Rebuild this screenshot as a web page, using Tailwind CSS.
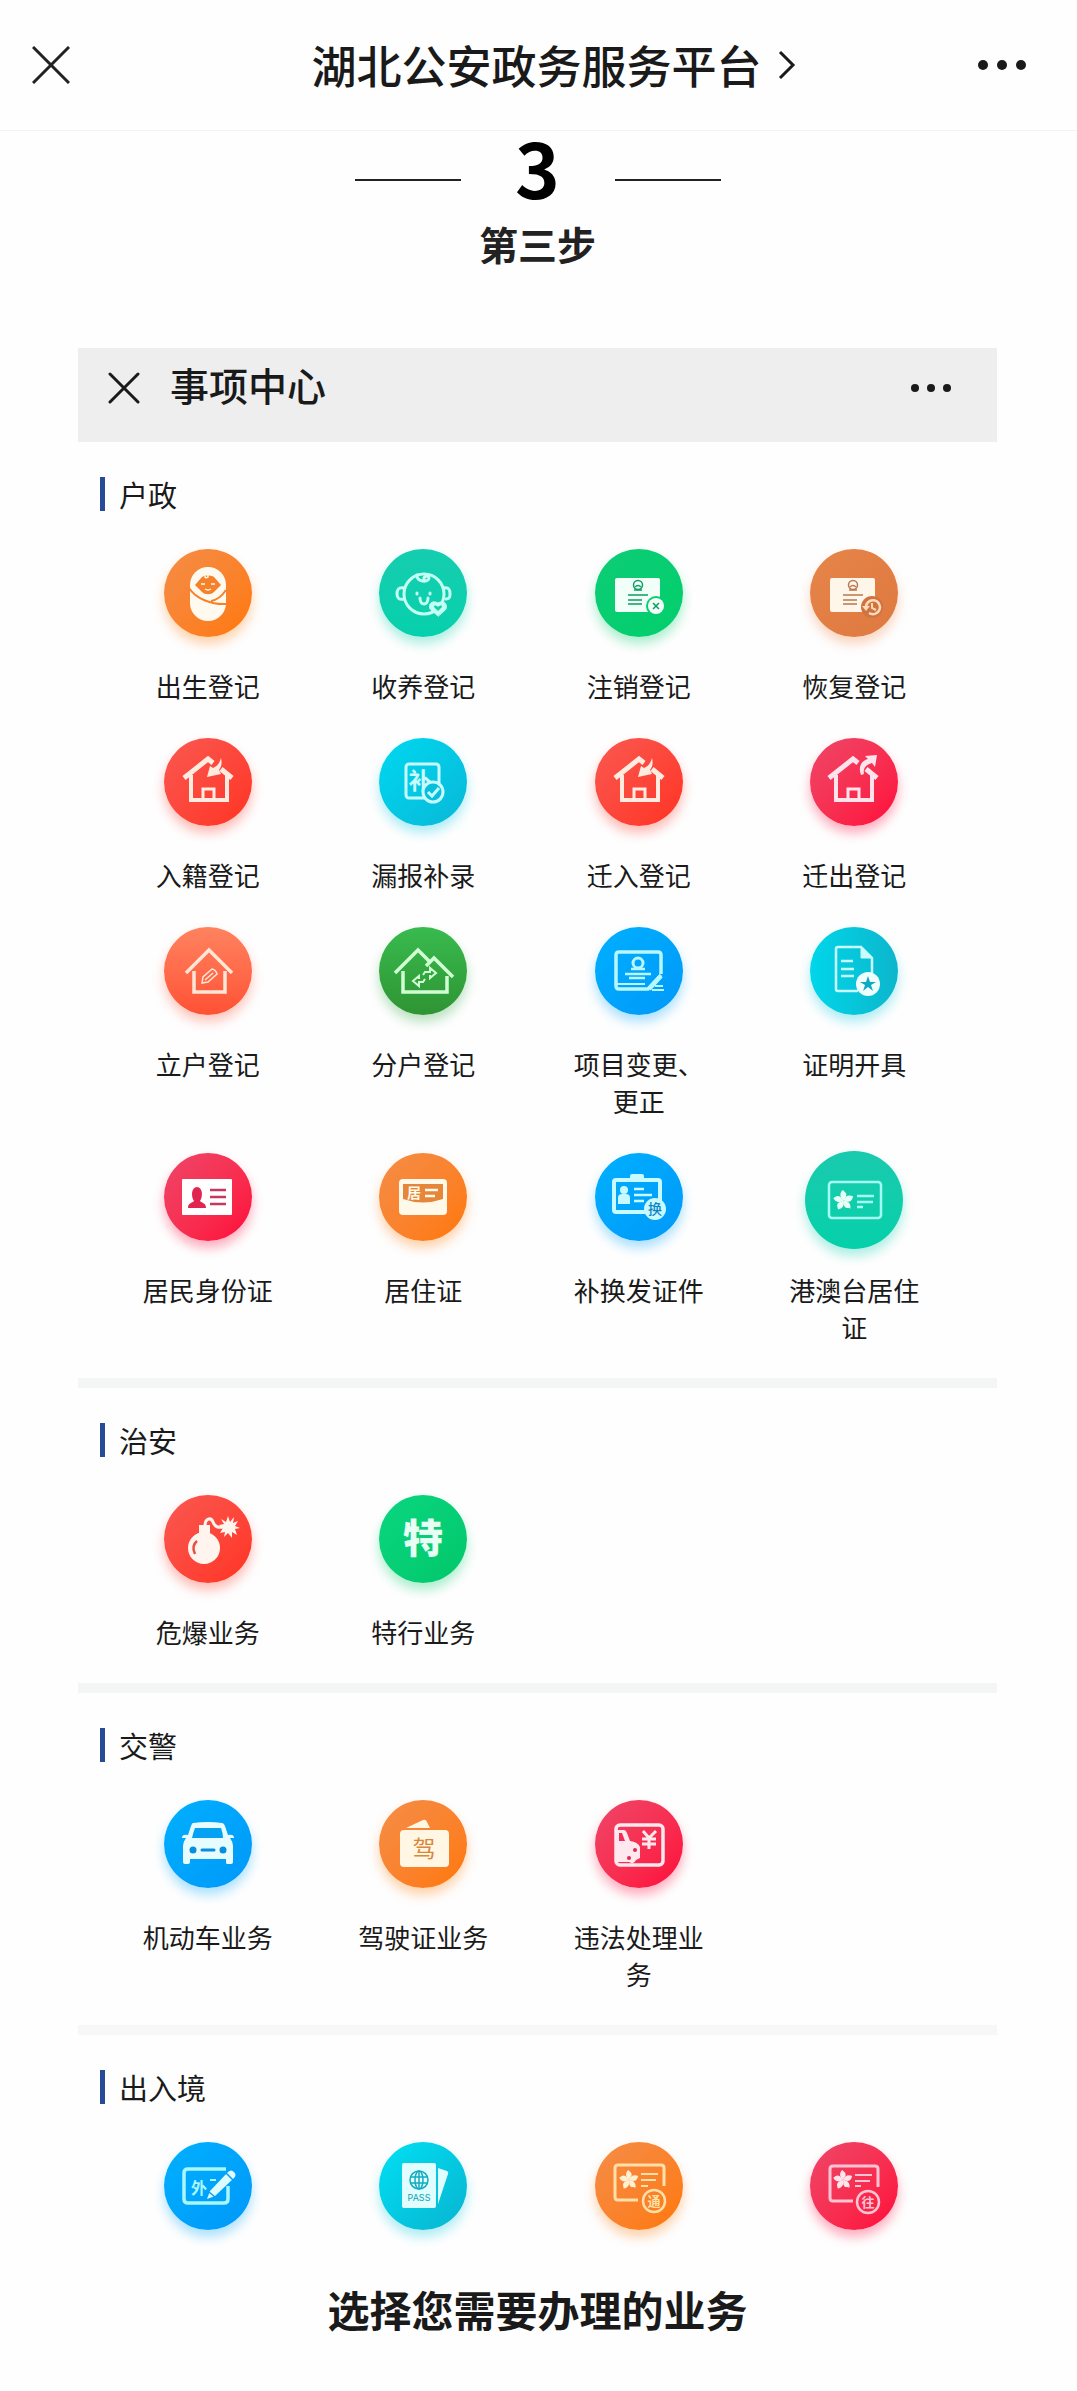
<!DOCTYPE html>
<html lang="zh-CN">
<head>
  <meta charset="UTF-8" />
  <meta name="viewport" content="width=device-width, initial-scale=1" />
  <title>湖北公安政务服务平台</title>
  <script src="https://cdn.jsdelivr.net/npm/@tailwindcss/browser@4"></script>
</head>
<body class="bg-[#fefefe] text-[#1a1a1a] font-['Noto_Sans_CJK_SC',sans-serif]">

  <!-- shared icon parts -->
  <svg class="hidden" aria-hidden="true">
    <symbol id="flower" viewBox="-12 -12 24 24">
      <g fill="currentColor">
        <path id="petal" d="M0 0C-4 -3 -5 -8 -1 -12C1 -10 4 -9 3 -5C2 -3 1 -2 0 0Z" />
        <use href="#petal" transform="rotate(72)" />
        <use href="#petal" transform="rotate(144)" />
        <use href="#petal" transform="rotate(216)" />
        <use href="#petal" transform="rotate(288)" />
      </g>
    </symbol>
    <symbol id="house" viewBox="0 0 88 88">
      <g fill="none" stroke="currentColor" stroke-width="4">
        <path d="M20 40L44 21L49 25M57 31L68 40" stroke-width="5" />
        <path d="M27 37V62H63V37" />
        <path d="M39 62V51H50V62" stroke-width="3" />
      </g>
    </symbol>
    <symbol id="house-in" viewBox="0 0 88 88">
      <use href="#house" />
      <path d="M57 20C58 25 58 28 55 32L57 36L43 39L46 28L49 30C54 28 56 24 57 20Z" fill="currentColor" />
    </symbol>
  </svg>

  <header class="flex h-[131px] items-center border-b border-[#f2f2f2]">
    <button type="button" aria-label="关闭" class="pl-[32px] pr-[60px]">
      <svg class="size-[38px]" viewBox="0 0 38 38" fill="none" stroke="#222" stroke-width="3"><path d="M1 1L37 37M37 1L1 37" /></svg>
    </button>
    <h1 class="flex-1 text-center">
      <a href="#" class="inline-flex items-center gap-4 text-[45px] leading-[60px] font-medium">
        湖北公安政务服务平台
        <svg class="h-[30px] w-[18px]" viewBox="0 0 18 30" fill="none" stroke="#1a1a1a" stroke-width="3"><path d="M2 2L15 15L2 28" /></svg>
      </a>
    </h1>
    <button type="button" aria-label="更多" class="pr-[50px]">
      <svg class="h-[12px] w-[50px]" viewBox="0 0 50 12" fill="#1a1a1a"><circle cx="6" cy="6" r="5" /><circle cx="25" cy="6" r="5" /><circle cx="44" cy="6" r="5" /></svg>
    </button>
  </header>

  <main class="pr-[80px] pl-[78px]">
    <div class="flex items-center justify-center pt-[5px]">
      <span class="h-0.5 w-[106px] bg-[#222]"></span>
      <span class="w-[154px] pb-7 text-center text-[76px] leading-[60px] font-bold text-black">3</span>
      <span class="h-0.5 w-[106px] bg-[#222]"></span>
    </div>
    <h2 class="text-center text-[39px] leading-[38px] font-bold text-[#222]">第三步</h2>

    <div class="mt-[86px]">
      <div class="flex h-[94px] items-center bg-[#eee] pr-[45px] pb-3.5 pl-[30px]">
        <button type="button" aria-label="返回">
          <svg class="size-[32px]" viewBox="0 0 32 32" fill="none" stroke="#1a1a1a" stroke-width="3" stroke-linecap="round"><path d="M2 2L30 30M30 2L2 30" /></svg>
        </button>
        <h3 class="ml-[30px] flex-1 pb-2 text-[39px] leading-[44px] font-medium">事项中心</h3>
        <button type="button" aria-label="菜单">
          <svg class="h-[10px] w-[42px]" viewBox="0 0 42 10" fill="#1a1a1a"><circle cx="5" cy="5" r="4" /><circle cx="21" cy="5" r="4" /><circle cx="37" cy="5" r="4" /></svg>
        </button>
      </div>

      <!-- 户政 -->
      <section class="border-b-[10px] border-[#f4f6f6] pt-[35px] pr-[35px] pb-[33px] pl-[22px]">
        <h4 class="flex h-[34px] items-center border-l-[5px] border-[#274b98] pl-3.5 text-[29px] leading-[34px]">户政</h4>
        <div class="mt-[38px] grid grid-cols-4 gap-y-[34px] text-center text-[26px] leading-[37px]">
          <a href="#" class="flex flex-col items-center gap-[30px]">
            <span class="size-[88px] rounded-full bg-linear-to-br from-[#f48d45] to-[#ff7800] text-[#fffaf0] shadow-[0_7px_12px_#ff780055]">
              <svg viewBox="0 0 88 88">
                <rect x="26" y="18" width="36" height="54" rx="18" fill="currentColor" />
                <path d="M31 36L38 28C41 26 47 26 50 28L57 36L50 43C47 46 41 46 38 43Z" fill="#f5822b" />
                <path d="M25 39C32 50 48 56 63 55M62 41C58 47 53 51 47 52" fill="none" stroke="#f5822b" stroke-width="2" />
                <path d="M44 26V28Q41 30 41 27M37 35H41M47 35H51M41 40Q44 42 47 40" fill="none" stroke="currentColor" stroke-width="1.5" />
              </svg>
            </span>
            <span class="w-[140px]">出生登记</span>
          </a>
          <a href="#" class="flex flex-col items-center gap-[30px]">
            <span class="size-[88px] rounded-full bg-linear-to-b from-[#15cdb0] to-[#06d0ac] text-[#c4fff4] shadow-[0_7px_12px_#06d0ac55]">
              <svg viewBox="0 0 88 88" fill="none" stroke="currentColor" stroke-width="3" stroke-linecap="round">
                <circle cx="45" cy="45" r="20" />
                <path d="M25 39C19 38 18 41 18 45C18 49 20 51 25 50M65 39C70 38 71 41 71 45C71 49 70 50 67 50" />
                <path d="M38 26C37 33 50 34 50 29C50 26 44 27 45 30" />
                <path d="M38 44V45M51 44V45" />
                <path d="M41 49C41 57 49 57 49 49" />
                <path d="M59 67L51 60C49 54 54 51 59 54C64 51 69 54 67 60Z" fill="currentColor" stroke-width="1" />
                <path d="M59 62L55 58C55 56 57 56 59 58C61 56 63 56 63 58Z" fill="#10cfad" stroke="none" />
              </svg>
            </span>
            <span class="w-[140px]">收养登记</span>
          </a>
          <a href="#" class="flex flex-col items-center gap-[30px]">
            <span class="size-[88px] rounded-full bg-linear-to-br from-[#0dcc76] to-[#02cf6b] text-[#f2fff8] shadow-[0_7px_12px_#02cf6b55]">
              <svg viewBox="0 0 88 88">
                <rect x="20" y="29" width="45" height="34" rx="2" fill="currentColor" />
                <g fill="none" stroke="#0b9f60" stroke-width="1.5">
                  <circle cx="43" cy="36" r="4.5" /><path d="M39 41H47M40 38Q43 35 46 38" />
                  <path d="M33 46H53M33 51H47M33 55H47" />
                </g>
                <circle cx="61" cy="57" r="10" fill="#07cd70" />
                <circle cx="61" cy="57" r="8" fill="currentColor" />
                <path d="M58 54L64 60M64 54L58 60" stroke="#0b9f60" stroke-width="1.5" />
              </svg>
            </span>
            <span class="w-[140px]">注销登记</span>
          </a>
          <a href="#" class="flex flex-col items-center gap-[30px]">
            <span class="size-[88px] rounded-full bg-linear-to-br from-[#e78549] to-[#de783f] text-[#fff6ea] shadow-[0_7px_12px_#f0803f55]">
              <svg viewBox="0 0 88 88">
                <rect x="20" y="29" width="45" height="34" rx="2" fill="currentColor" />
                <g fill="none" stroke="#b97850" stroke-width="1.5">
                  <circle cx="43" cy="36" r="4.5" /><path d="M39 41H47M40 38Q43 35 46 38" />
                  <path d="M33 46H53M33 51H47M33 55H47" />
                </g>
                <circle cx="62" cy="58" r="11" fill="#cf7440" />
                <path d="M56 59A7 7 0 1 1 59 64" fill="none" stroke="#ffd9b8" stroke-width="2.5" />
                <path d="M52 57H60L56 62Z" fill="#ffd9b8" />
                <path d="M62 54V59L66 61" fill="none" stroke="#ffd9b8" stroke-width="2" />
              </svg>
            </span>
            <span class="w-[140px]">恢复登记</span>
          </a>

          <a href="#" class="flex flex-col items-center gap-[30px]">
            <span class="size-[88px] rounded-full bg-linear-to-br from-[#fa5750] to-[#ff3220] text-[#ffebe0] shadow-[0_7px_12px_#ff322055]">
              <svg viewBox="0 0 88 88"><use href="#house-in" /></svg>
            </span>
            <span class="w-[140px]">入籍登记</span>
          </a>
          <a href="#" class="flex flex-col items-center gap-[30px]">
            <span class="size-[88px] rounded-full bg-linear-to-br from-[#00d8f0] to-[#08b8d8] text-[#c6fbff] shadow-[0_7px_12px_#08c8e855]">
              <svg viewBox="0 0 88 88" fill="none" stroke="currentColor" stroke-width="3">
                <rect x="27" y="26" width="33" height="34" rx="3" />
                <text x="41" y="51" font-size="23" font-weight="700" text-anchor="middle" fill="currentColor" stroke="none">补</text>
                <circle cx="54" cy="54" r="10" fill="#06bfdc" />
                <path d="M49 54L53 58L60 50" />
              </svg>
            </span>
            <span class="w-[140px]">漏报补录</span>
          </a>
          <a href="#" class="flex flex-col items-center gap-[30px]">
            <span class="size-[88px] rounded-full bg-linear-to-br from-[#fa5750] to-[#ff3220] text-[#ffebe0] shadow-[0_7px_12px_#ff322055]">
              <svg viewBox="0 0 88 88"><use href="#house-in" /></svg>
            </span>
            <span class="w-[140px]">迁入登记</span>
          </a>
          <a href="#" class="flex flex-col items-center gap-[30px]">
            <span class="size-[88px] rounded-full bg-linear-to-br from-[#ee4468] to-[#ff0038] text-[#ffe3ec] shadow-[0_7px_12px_#ff003855]">
              <svg viewBox="0 0 88 88">
                <use href="#house" x="-1" />
                <path d="M51 37C48 29 51 23 58 21L55 18L67 17L65 29L62 25C55 27 53 31 54 36Z" fill="currentColor" />
              </svg>
            </span>
            <span class="w-[140px]">迁出登记</span>
          </a>

          <a href="#" class="flex flex-col items-center gap-[30px]">
            <span class="size-[88px] rounded-full bg-linear-to-b from-[#ff825f] to-[#ff5034] text-[#ffe6d6] shadow-[0_7px_12px_#ff503455]">
              <svg viewBox="0 0 88 88" fill="none" stroke="currentColor" stroke-width="3.5">
                <path d="M22 46L45 23L68 46M30 44V65H61V44" />
                <path d="M38 56L39 50L48 42Q52 43 53 47L44 55ZM41 53L49 46" stroke-width="1.5" />
              </svg>
            </span>
            <span class="w-[140px]">立户登记</span>
          </a>
          <a href="#" class="flex flex-col items-center gap-[30px]">
            <span class="size-[88px] rounded-full bg-linear-to-b from-[#38bb4e] to-[#2f9433] text-[#d0ffd4] shadow-[0_7px_12px_#2fa84555]">
              <svg viewBox="0 0 88 88" fill="none" stroke="currentColor" stroke-width="3.5">
                <path d="M16 46L39 23L50 34M47 39L55 31L74 50M24 44V65H68V49" />
                <path d="M44 48L46 45H51V41L57 46L51 51V48M46 52L44 55H40V59L34 54L40 49V52" stroke-width="2" />
              </svg>
            </span>
            <span class="w-[140px]">分户登记</span>
          </a>
          <a href="#" class="flex flex-col items-center gap-[30px]">
            <span class="size-[88px] rounded-full bg-linear-to-br from-[#00b0ff] to-[#0098f8] text-[#b8f7ff] shadow-[0_7px_12px_#00a4ff55]">
              <svg viewBox="0 0 88 88" fill="none" stroke="currentColor" stroke-width="3.5">
                <path d="M66 47V28Q66 25 63 25H24Q21 25 21 28V59Q21 62 24 62H53L66 48" />
                <circle cx="43" cy="36" r="5" stroke-width="3" />
                <path d="M36 42H50M30 47H56M34 51H50" stroke-width="2.5" />
                <path d="M22 57H50M60 59H68M57 63H69" stroke-width="2" />
                <path d="M66 49L54 62" stroke-width="4.5" />
              </svg>
            </span>
            <span class="w-[140px]">项目变更、更正</span>
          </a>
          <a href="#" class="flex flex-col items-center gap-[30px]">
            <span class="size-[88px] rounded-full bg-linear-to-r from-[#00d6ea] to-[#0cb6cc] text-[#c8fdff] shadow-[0_7px_12px_#08c8e055]">
              <svg viewBox="0 0 88 88" fill="none" stroke="currentColor" stroke-width="2.5">
                <path d="M62 46V31L51 20H28Q26 20 26 22V62Q26 64 28 64H48M31 34H43M31 42H44M31 49H44" />
                <path d="M51 19V31H63Z" fill="currentColor" stroke-width="1" />
                <circle cx="58" cy="57" r="12" fill="#effeff" stroke="none" />
                <path d="M58 49L60 55H66L61 58L63 64L58 60L53 64L55 58L50 55H56Z" fill="#0cabc2" stroke="none" />
              </svg>
            </span>
            <span class="w-[140px]">证明开具</span>
          </a>

          <a href="#" class="flex flex-col items-center gap-[30px]">
            <span class="size-[88px] rounded-full bg-linear-to-br from-[#ee4468] to-[#ff0038] text-white shadow-[0_7px_12px_#ff003855]">
              <svg viewBox="0 0 88 88">
                <rect x="18" y="26" width="50" height="36" rx="1" fill="currentColor" />
                <path d="M24 55C24 50 28 50 30 48C27 44 27 34 33 34C39 34 39 44 36 48C38 50 42 50 42 55Z" fill="#e22550" />
                <path d="M46 37H62M46 44H62M46 51H62" stroke="#c23a5c" stroke-width="2.5" />
              </svg>
            </span>
            <span class="w-[140px]">居民身份证</span>
          </a>
          <a href="#" class="flex flex-col items-center gap-[30px]">
            <span class="size-[88px] rounded-full bg-linear-to-br from-[#f48d45] to-[#ff7800] text-[#fff9ea] shadow-[0_7px_12px_#ff780055]">
              <svg viewBox="0 0 88 88">
                <rect x="20" y="26" width="48" height="36" rx="4" fill="currentColor" />
                <path d="M24 31H64V46Q44 53 24 46Z" fill="#e5863a" />
                <text x="35" y="45" font-size="14" font-weight="700" text-anchor="middle" fill="currentColor">居</text>
                <path d="M46 37H59M46 43H56" stroke="currentColor" stroke-width="2.5" />
              </svg>
            </span>
            <span class="w-[140px]">居住证</span>
          </a>
          <a href="#" class="flex flex-col items-center gap-[30px]">
            <span class="size-[88px] rounded-full bg-linear-to-br from-[#00b0ff] to-[#0098f8] text-[#c8f9ff] shadow-[0_7px_12px_#00a4ff55]">
              <svg viewBox="0 0 88 88">
                <rect x="19" y="27" width="46" height="32" rx="2" fill="none" stroke="currentColor" stroke-width="4" />
                <path d="M35 26V23Q35 21 37 21H47Q49 21 49 23V26Z" fill="currentColor" />
                <circle cx="29" cy="37" r="4" fill="currentColor" />
                <path d="M23 51V45Q23 41 27 41H31Q35 41 35 45V51Z" fill="currentColor" />
                <path d="M39 36H49M39 42H57M39 48H49" stroke="currentColor" stroke-width="2.5" />
                <circle cx="60" cy="56" r="11" fill="currentColor" />
                <text x="60" y="61" font-size="14" font-weight="500" text-anchor="middle" fill="#0b84c4">换</text>
              </svg>
            </span>
            <span class="w-[140px]">补换发证件</span>
          </a>
          <a href="#" class="flex flex-col items-center gap-[30px]">
            <span class="-mt-0.5 -mb-2 size-[98px] rounded-full bg-linear-to-b from-[#19caae] to-[#04d0aa] text-[#a4fff2] shadow-[0_7px_12px_#06d0ac55]">
              <svg viewBox="0 0 98 98">
                <rect x="24" y="31" width="52" height="36" rx="3" fill="none" stroke="currentColor" stroke-width="2.5" />
                <use href="#flower" x="28" y="39" width="21" height="21" class="text-[#e8fff8]" />
                <path d="M52 45H69M52 51H68M52 56H58" stroke="currentColor" stroke-width="2.5" />
              </svg>
            </span>
            <span class="w-[140px]">港澳台居住证</span>
          </a>
        </div>
      </section>

      <!-- 治安 -->
      <section class="border-b-[10px] border-[#f4f6f6] pt-[35px] pr-[35px] pb-[33px] pl-[22px]">
        <h4 class="flex h-[34px] items-center border-l-[5px] border-[#274b98] pl-3.5 text-[29px] leading-[34px]">治安</h4>
        <div class="mt-[38px] grid grid-cols-4 gap-y-[34px] text-center text-[26px] leading-[37px]">
          <a href="#" class="flex flex-col items-center gap-[30px]">
            <span class="size-[88px] rounded-full bg-linear-to-br from-[#fa5750] to-[#ff3220] text-[#fff5ee] shadow-[0_7px_12px_#ff322055]">
              <svg viewBox="0 0 88 88">
                <circle cx="40" cy="53" r="16" fill="currentColor" />
                <rect x="35" y="30" width="11" height="10" fill="currentColor" />
                <path d="M41 31C41 23 47 22 49 27C51 32 54 33 60 32" fill="none" stroke="currentColor" stroke-width="3" />
                <path d="M64 21L66 27L70 22L69 28L74 26L71 31L76 33L71 34L73 40L68 37L68 43L64 38L60 42L61 37L56 38L59 33L55 30L60 29L57 24L62 27Z" fill="currentColor" />
                <path d="M33 46Q27 51 31 59" fill="none" stroke="#e8503f" stroke-width="2.5" />
              </svg>
            </span>
            <span class="w-[140px]">危爆业务</span>
          </a>
          <a href="#" class="flex flex-col items-center gap-[30px]">
            <span class="size-[88px] rounded-full bg-linear-to-br from-[#0ad680] to-[#02c76a] text-[#e8fff4] shadow-[0_7px_12px_#02cf6b55]">
              <svg viewBox="0 0 88 88"><text x="44" y="58" font-size="40" font-weight="900" text-anchor="middle" fill="currentColor">特</text></svg>
            </span>
            <span class="w-[140px]">特行业务</span>
          </a>
        </div>
      </section>

      <!-- 交警 -->
      <section class="border-b-[10px] border-[#f7f7f7] pt-[35px] pr-[35px] pb-[33px] pl-[22px]">
        <h4 class="flex h-[34px] items-center border-l-[5px] border-[#274b98] pl-3.5 text-[29px] leading-[34px]">交警</h4>
        <div class="mt-[38px] grid grid-cols-4 gap-y-[34px] text-center text-[26px] leading-[37px]">
          <a href="#" class="flex flex-col items-center gap-[30px]">
            <span class="size-[88px] rounded-full bg-linear-to-br from-[#00b0ff] to-[#0098f8] text-[#e6fcff] shadow-[0_7px_12px_#00a4ff55]">
              <svg viewBox="0 0 88 88">
                <path d="M29 23Q44 21 58 23Q60 23 61 26L64 35Q70 34 70 38H66Q69 42 69 46V62Q69 64 67 64H63Q62 64 62 62V59H26V62Q26 64 24 64H21Q19 64 19 62V46Q19 42 22 38H18Q18 34 24 35L27 26Q28 23 29 23Z" fill="currentColor" />
                <path d="M31 28H57Q59 33 59 38H28Q29 33 31 28Z" fill="#05a2f4" />
                <circle cx="29" cy="50" r="3.5" fill="#0590dc" /><circle cx="59" cy="50" r="3.5" fill="#0590dc" />
                <path d="M38 50H50" stroke="#0590dc" stroke-width="3" stroke-linecap="round" />
              </svg>
            </span>
            <span class="w-[140px]">机动车业务</span>
          </a>
          <a href="#" class="flex flex-col items-center gap-[30px]">
            <span class="size-[88px] rounded-full bg-linear-to-br from-[#f48d45] to-[#ff7800] text-[#fff6e4] shadow-[0_7px_12px_#ff780055]">
              <svg viewBox="0 0 88 88">
                <rect x="21" y="30" width="49" height="37" rx="4" fill="currentColor" />
                <path d="M27 28L44 20Q47 19 48 22L51 28Z" fill="currentColor" />
                <text x="45" y="57" font-size="23" text-anchor="middle" fill="#d9873a">驾</text>
              </svg>
            </span>
            <span class="w-[140px]">驾驶证业务</span>
          </a>
          <a href="#" class="flex flex-col items-center gap-[30px]">
            <span class="size-[88px] rounded-full bg-linear-to-br from-[#ee4468] to-[#ff0038] text-[#ffe9ef] shadow-[0_7px_12px_#ff003855]">
              <svg viewBox="0 0 88 88">
                <rect x="21" y="25" width="47" height="40" rx="4" fill="none" stroke="currentColor" stroke-width="3.5" />
                <path d="M21 30H29Q31 30 32 33L35 41Q43 42 45 47V58L41 60Q39 65 34 62H21Z" fill="currentColor" />
                <path d="M24 33H27L30 41H24Z" fill="#f52c56" />
                <circle cx="40" cy="50" r="2" fill="#e02a50" /><circle cx="34" cy="58" r="2" fill="#e02a50" />
                <path d="M48 31L54 38L61 31M54 38V49M47 39H61M47 44H61" fill="none" stroke="currentColor" stroke-width="3" />
              </svg>
            </span>
            <span class="w-[140px]">违法处理业务</span>
          </a>
        </div>
      </section>

      <!-- 出入境 -->
      <section class="pt-[35px] pr-[35px] pb-[33px] pl-[22px]">
        <h4 class="flex h-[34px] items-center border-l-[5px] border-[#274b98] pl-3.5 text-[29px] leading-[34px]">出入境</h4>
        <div class="mt-[38px] grid grid-cols-4 justify-items-center">
          <a href="#" aria-label="外国人证件" class="size-[88px] rounded-full bg-linear-to-br from-[#00b0ff] to-[#0098f8] text-[#a8f6ff] shadow-[0_7px_12px_#00a4ff55]">
            <svg viewBox="0 0 88 88">
              <path d="M62 27H24Q20 27 20 31V57Q20 61 24 61H60Q64 61 64 57V44" fill="none" stroke="currentColor" stroke-width="3.5" />
              <text x="35" y="52" font-size="16" font-weight="700" text-anchor="middle" fill="currentColor">外</text>
              <path d="M46 38H52" stroke="currentColor" stroke-width="2" />
              <path d="M43 57L46 49L64 30Q67 27 70 30Q73 33 70 36L51 54Z" fill="#dcfcff" />
              <path d="M62 31L69 38M45 50L51 55" stroke="#0b9ef5" stroke-width="1.5" />
            </svg>
          </a>
          <a href="#" aria-label="护照" class="size-[88px] rounded-full bg-linear-to-br from-[#00e0f4] to-[#08b4d0] text-[#e0fdff] shadow-[0_7px_12px_#08c8e055]">
            <svg viewBox="0 0 88 88">
              <rect x="23" y="21" width="34" height="45" rx="2" fill="currentColor" />
              <path d="M59 26L68 29Q70 30 69 32L59 62Z" fill="currentColor" />
              <g fill="none" stroke="#12abc0" stroke-width="1.5">
                <circle cx="40" cy="38" r="9" /><ellipse cx="40" cy="38" rx="4" ry="9" />
                <path d="M32 35H48M32 41H48M40 29V47" />
              </g>
              <text x="40" y="59" font-size="9" font-family="Inter, sans-serif" text-anchor="middle" fill="#12a0b4">PASS</text>
            </svg>
          </a>
          <a href="#" aria-label="往来港澳通行证" class="size-[88px] rounded-full bg-linear-to-br from-[#f48d45] to-[#ff7800] text-[#ffe0a8] shadow-[0_7px_12px_#ff780055]">
            <svg viewBox="0 0 88 88">
              <path d="M69 44V26Q69 23 66 23H23Q20 23 20 26V55Q20 58 23 58H43" fill="none" stroke="currentColor" stroke-width="3" />
              <use href="#flower" x="24" y="28" width="20" height="20" class="text-[#fff0d0]" />
              <path d="M46 32H63M46 38H61M46 44H53" stroke="currentColor" stroke-width="2" />
              <circle cx="59" cy="59" r="11" fill="none" stroke="currentColor" stroke-width="2.5" />
              <text x="59" y="64" font-size="13" font-weight="700" text-anchor="middle" fill="currentColor">通</text>
            </svg>
          </a>
          <a href="#" aria-label="往来签注" class="size-[88px] rounded-full bg-linear-to-br from-[#ee4468] to-[#ff0038] text-[#ffc4d4] shadow-[0_7px_12px_#ff003855]">
            <svg viewBox="0 0 88 88">
              <path d="M68 45V27Q68 24 65 24H23Q20 24 20 27V56Q20 59 23 59H43" fill="none" stroke="currentColor" stroke-width="3" />
              <use href="#flower" x="23" y="28" width="20" height="20" class="text-[#ffe4ea]" />
              <path d="M45 33H62M45 39H60M45 44H51" stroke="currentColor" stroke-width="2" />
              <circle cx="58" cy="60" r="11" fill="none" stroke="currentColor" stroke-width="2.5" />
              <text x="58" y="65" font-size="13" font-weight="700" text-anchor="middle" fill="currentColor">往</text>
            </svg>
          </a>
        </div>
      </section>
    </div>

    <p class="mt-4 pb-[50px] text-center text-[42px] leading-[60px] font-bold">选择您需要办理的业务</p>
  </main>
</body>
</html>
